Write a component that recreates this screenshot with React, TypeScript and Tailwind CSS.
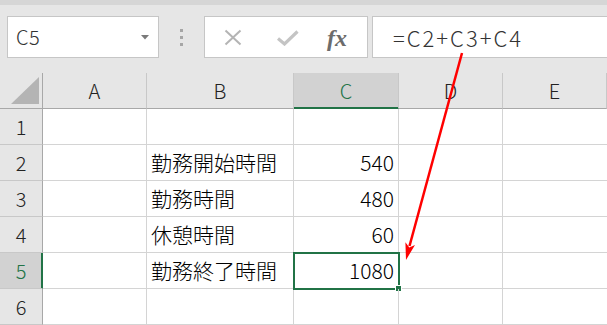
import React from "react";

const cols = ["A", "B", "C", "D", "E"];
const rows: { b?: string; c?: string }[] = [
  {},
  { b: "勤務開始時間", c: "540" },
  { b: "勤務時間", c: "480" },
  { b: "休憩時間", c: "60" },
  { b: "勤務終了時間", c: "1080" },
  {},
];

const font = { fontFamily: '"Noto Sans CJK JP", "Noto Sans", sans-serif' };

export default function App() {
  return (
    <div className="relative w-[607px] h-[325px] overflow-hidden bg-white text-black font-light" style={font}>
      {/* toolbar */}
      <div className="h-[73px] bg-[#e6e6e6]">
        <div className="h-[5px] bg-[#d6d6d6]" />
        <div className="flex items-start pl-[7px] pt-[11px]">
          <div className="w-[152px] h-[42px] shrink-0 border border-[#c6c6c6] bg-white flex items-center justify-between pl-[8px] pr-[9px]">
            <span className="text-[20px] leading-none text-[#333] tracking-[0.5px]">C5</span>
            <svg width="8" height="5" viewBox="0 0 8 5">
              <polygon points="0,0 8,0 4,4.5" fill="#7a7a7a" />
            </svg>
          </div>
          <div className="w-[45px] h-[42px] shrink-0 flex flex-col items-center justify-center gap-[4px]">
            <div className="w-[3px] h-[3px] bg-[#a6a6a6]" />
            <div className="w-[3px] h-[3px] bg-[#a6a6a6]" />
            <div className="w-[3px] h-[3px] bg-[#a6a6a6]" />
          </div>
          <div className="relative w-[164px] h-[42px] shrink-0 border border-[#c6c6c6] bg-white">
            <svg className="absolute left-[19px] top-[12px]" width="18" height="17" viewBox="0 0 18 17">
              <line x1="1.5" y1="1.5" x2="16.5" y2="15.5" stroke="#b4b4b4" strokeWidth="2" />
              <line x1="16.5" y1="1.5" x2="1.5" y2="15.5" stroke="#b4b4b4" strokeWidth="2" />
            </svg>
            <svg className="absolute left-[72px] top-[13px]" width="22" height="16" viewBox="0 0 22 16">
              <polyline points="1,8.5 7.5,14 20.5,1.5" fill="none" stroke="#c4c4c4" strokeWidth="3.2" />
            </svg>
            <span
              className="absolute left-[122px] top-[9px] text-[24px] leading-none italic font-bold text-[#6c6c6c]"
              style={{ fontFamily: '"Liberation Serif", serif' }}
            >
              fx
            </span>
          </div>
          <div className="ml-[4px] flex-1 -mr-[3px] h-[42px] border border-[#c6c6c6] bg-white flex items-center pl-[20px]">
            <span className="text-[22px] leading-none text-[#333] tracking-[2px]">=C2+C3+C4</span>
          </div>
        </div>
      </div>

      {/* grid */}
      <div className="grid grid-cols-[43px_104px_147px_105px_104px_104px]">
        {/* header row */}
        <div className="relative h-[36px] bg-[#e6e6e6] border-r border-b border-[#a8a8a8]">
          <svg className="absolute left-[11px] top-[4px]" width="29" height="28" viewBox="0 0 29 28">
            <polygon points="0,27 28,27 28,0" fill="#b4b4b4" />
          </svg>
        </div>
        {cols.map((c) => (
          <div
            key={c}
            className={
              "relative h-[36px] flex items-center justify-center text-[20px] leading-none border-b " +
              (c === "C"
                ? "bg-[#d2d2d2] text-[#217346] border-b-[#217346] border-r border-r-[#c8c8c8]"
                : "bg-[#e6e6e6] text-[#222] border-b-[#a8a8a8] border-r border-r-[#c8c8c8]")
            }
          >
            {c}
            {c === "C" && <div className="absolute left-0 right-0 bottom-0 h-[1px] bg-[#217346]" />}
          </div>
        ))}

        {rows.map((r, i) => {
          const n = i + 1;
          const sel = n === 5;
          return (
            <React.Fragment key={n}>
              <div
                className={
                  "relative h-[36px] flex items-center justify-center text-[20px] leading-none border-r border-b border-b-[#c8c8c8] " +
                  (sel
                    ? "bg-[#d2d2d2] text-[#217346] border-r-[#217346]"
                    : "bg-[#e6e6e6] text-[#222] border-r-[#a8a8a8]")
                }
              >
                {n}
                {sel && <div className="absolute top-0 bottom-0 right-0 w-[1px] bg-[#217346]" />}
              </div>
              <div className="h-[36px] border-r border-b border-[#d4d4d4]" />
              <div className="h-[36px] border-r border-b border-[#d4d4d4] flex items-center pl-[4px] text-[21px] leading-none whitespace-nowrap">
                {r.b}
              </div>
              <div className="relative h-[36px] border-r border-b border-[#d4d4d4] flex items-center justify-end pr-[4px] text-[21px] leading-none">
                {r.c}
                {sel && (
                  <div className="absolute left-[-1px] right-[-2px] top-[-1px] bottom-[-2px] border-2 border-[#217346]">
                    <div className="absolute right-[-4px] bottom-[-4px] w-[7px] h-[7px] bg-[#217346] border border-white" />
                  </div>
                )}
              </div>
              <div className="h-[36px] border-r border-b border-[#d4d4d4]" />
              <div className="h-[36px] border-b border-[#d4d4d4]" />
            </React.Fragment>
          );
        })}
      </div>

      {/* red arrow */}
      <svg className="absolute left-0 top-0 pointer-events-none" width="607" height="325" viewBox="0 0 607 325">
        <line x1="462" y1="53" x2="409.5" y2="246" stroke="#ff0000" strokeWidth="2.5" />
        <polygon points="406,260 405.4,242.3 409.3,247.5 415,244.9" fill="#ff0000" />
      </svg>
    </div>
  );
}
